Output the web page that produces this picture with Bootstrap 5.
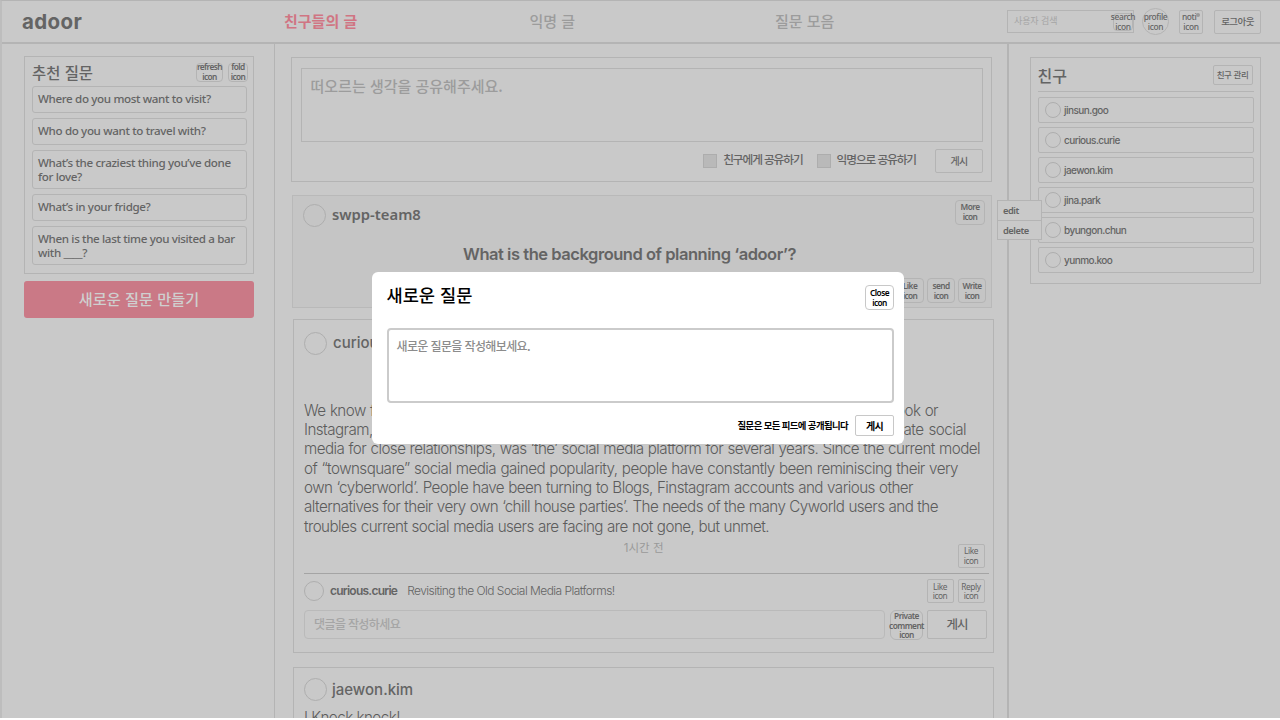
<!DOCTYPE html>
<html lang="ko">
<head>
<meta charset="utf-8">
<meta name="viewport" content="width=device-width, initial-scale=1">
<title>adoor</title>
<link href="https://cdn.jsdelivr.net/npm/bootstrap@5.3.0/dist/css/bootstrap.min.css" rel="stylesheet">
<style>
  :root { --page:#c9c9c9; --line:#b4b4b4; --ink:#646464; --mute:#9c9c9c; --pink:#ca7986; }
  body { width:1280px; height:720px; overflow:hidden; background:#fff; color:var(--ink);
         font-family:"Noto Sans CJK KR","Noto Sans",sans-serif; font-weight:500; line-height:1.2; }
  .screen { height:718px; background:var(--page); overflow:hidden; border-left:2px solid #bdbdbd; border-top:1px solid var(--line); }
  .topbar, .btn, .tag { white-space:nowrap; }
  .inter { font-family:Inter,"Noto Sans CJK KR",sans-serif; }
  .line { border:1px solid var(--line); }
  .line2 { border:1.5px solid var(--line); }

  .topbar { height:43px; border-bottom:2px solid var(--line); padding:0 19px 0 20px; }
  .logo { width:262px; font:700 20.5px/1 Inter,sans-serif; letter-spacing:.4px; padding-top:2px; flex:none; }
  .tab { width:245.5px; font-size:15px; color:var(--mute); margin-top:-1px; }
  .tab.on { color:#d07583; font-weight:700; }
  .search { width:127px; height:23px; font-size:9px; color:#a5a5a5; font-weight:400; padding:0 0 0 6px; letter-spacing:-.1px; }
  .tag { display:flex; flex-direction:column; align-items:center; justify-content:center; text-align:center;
         flex:none; border:1.5px solid var(--line); border-radius:4px; font-size:8.3px; line-height:9.6px;
         font-family:"Noto Sans",sans-serif; letter-spacing:-.55px; font-weight:600; width:28px; height:25px; }
  .tag.thin { font-weight:400; border-radius:2px; width:27px; height:24px; border-width:1px; letter-spacing:-.4px; }
  .tag.top { font-weight:500; font-size:8.4px; color:var(--ink); letter-spacing:-.35px; }
  .btn { --bs-btn-padding-x:0; --bs-btn-padding-y:0; --bs-btn-border-radius:2px; --bs-btn-color:var(--ink); --bs-btn-font-weight:500;
         --bs-btn-border-color:var(--line); --bs-btn-line-height:1; display:flex; align-items:center; justify-content:center; flex:none; }
  .dot { position:absolute; width:4px; height:4px; right:2px; top:2px; border-radius:50%; background:#999; }

  .side-l { width:273px; border-right:1.5px solid var(--line); padding:12px 20px 0 22px; }
  .suggest { height:218px; padding:5px 6px 0 7px; width:230px; }
  .q { border:1.5px solid var(--line); border-radius:3px; min-height:26.5px; margin-bottom:5.5px; padding:4.5px 5px 2px; font:500 11.6px/14.4px "Noto Sans",sans-serif; letter-spacing:-.35px; white-space:nowrap; }
  .q.two { min-height:38.5px; }
  .make { width:230px; height:37px; margin-top:7px; padding-bottom:2px; background:var(--pink); color:#cfcfcf; border:0; border-radius:3px; font-size:15.2px; }

  .feed { width:733.5px; border-right:2px solid var(--line); padding:12.5px 13px 0 16px; }
  .composer { width:701px; height:125px; padding:10px 8px 0 8.5px; margin-bottom:13px; }
  .composer .area { height:74px; padding:8px 9px; font-size:15px; color:var(--mute); }
  .check { width:14px; height:14px; background:#b9b9b9; border:1px solid #adadad; }
  .lbl { letter-spacing:-1.1px; }
  .ask { width:700px; height:113px; margin-left:1px; background:#c5c5c5; border:1px solid #b9b9b9; padding:4px 5px 0 10px; margin-bottom:11px; }
  .face { border:1px solid #aeaeae; border-radius:50%; flex:none; width:23px; height:23px; }
  .who { font-size:15px; font-weight:500; margin-left:6px; }
  .ask .who { font:600 14.8px/23px "Noto Sans",sans-serif; margin-top:3px; }
  .ask h2 { font-size:16.5px; font-weight:600; margin:18px 30px 0 0; letter-spacing:-.46px; }
  .post { width:701px; margin-left:1.5px; border:1.5px solid var(--line); padding:12px 4px 0 10.5px; }
  .story { font-weight:300; font-size:15.2px; line-height:19.35px; margin-top:46px; color:#5c5c5c; letter-spacing:-.55px; }
  .story div { text-align-last:justify; white-space:nowrap; }
  .comment { height:36px; border-top:1px solid #a4a4a4; }
  .reply { width:581px; height:29px; border:1.5px solid #bababa; border-radius:4px; font-size:12px; line-height:27px; padding-left:9px; color:#a5a5a5; letter-spacing:-.6px; }

  .side-r { padding:12.5px 0 0 21.5px; flex:1; }
  .friends { width:230.5px; height:227px; padding:8px 6px 0 6.5px; border:1.5px solid var(--line); }
  .pal { height:26px; margin-bottom:4px; padding-left:6px; border:1.5px solid var(--line); border-radius:2px; font-size:10px; letter-spacing:-.55px; }
  .pal .face { width:16px; height:16px; margin-right:3.5px; }

  .menu { position:absolute; left:997px; top:200px; width:45px; height:40px; background:var(--page); font:600 9.3px/19px "Noto Sans",sans-serif; letter-spacing:-.45px; }
  .menu div { padding-left:5px; height:19.5px; }
  .ask-box { position:absolute; left:372px; top:272px; width:532px; height:172px; border-radius:6px; background:#fff; color:#000; padding:13px 10px 0 14.5px; }
  .ask-box .area { height:75px; border:2px solid #cbcbcb; border-radius:4px; padding:9px 8px; font-size:12px; color:#8c8c8c; margin-top:18px; letter-spacing:-.62px; }
  .ask-box .tag, .ask-box .btn { border:1.5px solid #c8c8c8; color:#000; }
</style>
</head>
<body>
<div class="screen">
  <header class="topbar d-flex align-items-center">
    <div class="logo">adoor</div>
    <nav class="d-flex">
      <span class="tab on">친구들의 글</span><span class="tab">익명 글</span><span class="tab" style="width:130px">질문 모음</span>
    </nav>
    <div class="d-flex align-items-center ms-auto">
      <div class="search line2 d-flex align-items-center justify-content-between"><span>사용자 검색</span><span class="tag top" style="width:20px;height:18px"><span>search</span><span>icon</span></span></div>
      <span class="tag top rounded-circle" style="width:27px;height:27px;margin-left:8px"><span>profile</span><span>icon</span></span>
      <span class="tag top position-relative" style="width:24px;height:24px;margin-left:10px;border-radius:2px"><span>noti&nbsp;&nbsp;</span><span>icon</span><i class="dot"></i></span>
      <button class="btn" style="width:47px;height:24px;margin-left:11px;font-size:9.5px;letter-spacing:-.6px">로그아웃</button>
    </div>
  </header>

  <div class="d-flex" style="height:675px">
    <aside class="side-l">
      <section class="suggest line2">
        <div class="d-flex align-items-center" style="height:24px">
          <span class="me-auto" style="font-size:15.4px;margin-top:-3px">추천 질문</span>
          <span class="tag" style="width:27px;height:19px;margin:-4px 5px 0 0"><span>refresh</span><span>icon</span></span>
          <span class="tag" style="width:20px;height:19px;margin:-4px -1px 0 0"><span>fold</span><span>icon</span></span>
        </div>
        <div class="q">Where do you most want to visit?</div>
        <div class="q">Who do you want to travel with?</div>
        <div class="q two">What’s the craziest thing you’ve done<br>for love?</div>
        <div class="q">What’s in your fridge?</div>
        <div class="q two">When is the last time you visited a bar<br>with ____?</div>
      </section>
      <button class="btn make">새로운 질문 만들기</button>
    </aside>

    <main class="feed">
      <section class="composer line2">
        <div class="area line">떠오르는 생각을 공유해주세요.</div>
        <div class="d-flex align-items-center justify-content-end" style="font-size:11.7px;margin-top:7px;height:24px">
          <span class="check"></span><span class="lbl" style="margin:-2px 14px 0 6px">친구에게 공유하기</span>
          <span class="check"></span><span class="lbl" style="margin:-2px 19px 0 6px">익명으로 공유하기</span>
          <button class="btn" style="width:48px;height:24px;font-size:10px;letter-spacing:-.7px">게시</button>
        </div>
      </section>

      <section class="ask">
        <div class="d-flex"><span class="face" style="margin-top:4px"></span><span class="who me-auto">swpp-team8</span><span class="tag" style="width:30px;margin-right:1px"><span>More</span><span>icon</span></span></div>
        <h2 class="inter text-center">What is the background of planning ‘adoor’?</h2>
        <div class="d-flex justify-content-end" style="gap:3px;margin-top:14px">
          <span class="tag"><span>Like</span><span>icon</span></span><span class="tag"><span>send</span><span>icon</span></span><span class="tag"><span>Write</span><span>icon</span></span>
        </div>
      </section>

      <section class="post inter" style="height:334px;margin-bottom:14px">
        <div class="d-flex align-items-center"><span class="face"></span><span class="who">curious.curie</span></div>
        <div class="story">
          <div style="width:634px">We know for a fact that many people are today connected to others using apps like Facebook or</div>
          <div style="width:662px">Instagram, but only a few of us still remember that before them there was Cyworld, a private social</div>
          <div style="width:676px">media for close relationships, was ‘the’ social media platform for several years. Since the current model</div>
          <div style="width:654px">of “townsquare” social media gained popularity, people have constantly been reminiscing their very</div>
          <div style="width:609px">own ‘cyberworld’. People have been turning to Blogs, Finstagram accounts and various other</div>
          <div style="width:634px">alternatives for their very own ‘chill house parties’. The needs of the many Cyworld users and the</div>
          <div style="width:465px">troubles current social media users are facing are not gone, but unmet.</div>
        </div>
        <div class="d-flex" style="height:37px;padding-right:4px">
          <span class="ms-auto" style="font-size:11.5px;color:#999;font-weight:400;margin-right:294px;padding-top:6px">1시간 전</span>
          <span class="tag thin mt-2"><span>Like</span><span>icon</span></span>
        </div>
        <div class="comment d-flex align-items-center" style="font-size:12px">
          <span class="face" style="width:20px;height:20px"></span><b style="font-weight:600;margin:0 10px 0 6px;letter-spacing:-.75px">curious.curie</b><span class="me-auto" style="font-weight:300;letter-spacing:-.55px">Revisiting the Old Social Media Platforms!</span>
          <span class="tag thin" style="margin-right:4px"><span>Like</span><span>icon</span></span><span class="tag thin" style="margin-right:4px"><span>Reply</span><span>icon</span></span>
        </div>
        <div class="d-flex" style="margin-top:1.5px">
          <div class="reply">댓글을 작성하세요</div>
          <span class="tag" style="width:33px;height:30px;margin:0 4px 0 5px;border-width:1px;border-radius:6px"><span>Private</span><span>comment</span><span>icon</span></span>
          <button class="btn" style="width:60px;height:29px;font-size:12.5px;letter-spacing:-1px">게시</button>
        </div>
      </section>

      <section class="post inter" style="height:80px;padding-top:10.5px">
        <div class="d-flex align-items-center"><span class="face"></span><span class="who" style="margin-left:5px">jaewon.kim</span></div>
        <div class="story" style="margin-top:7px">I Knock knock!</div>
      </section>
    </main>

    <aside class="side-r">
      <section class="friends">
        <div class="d-flex align-items-center" style="height:26px;border-bottom:1.5px solid var(--line);margin-bottom:5px"><span class="me-auto" style="font-size:16px;margin-bottom:4px">친구</span><button class="btn" style="width:40px;height:20px;font-size:8.5px;margin:0 1px 7px 0;letter-spacing:-.4px">친구 관리</button></div>
        <div class="pal inter d-flex align-items-center"><span class="face"></span>jinsun.goo</div>
        <div class="pal inter d-flex align-items-center"><span class="face"></span>curious.curie</div>
        <div class="pal inter d-flex align-items-center"><span class="face"></span>jaewon.kim</div>
        <div class="pal inter d-flex align-items-center"><span class="face"></span>jina.park</div>
        <div class="pal inter d-flex align-items-center"><span class="face"></span>byungon.chun</div>
        <div class="pal inter d-flex align-items-center"><span class="face"></span>yunmo.koo</div>
      </section>
    </aside>
  </div>
</div>

<div class="menu line"><div style="border-bottom:1px solid var(--line)">edit</div><div>delete</div></div>

<div class="ask-box" role="dialog" aria-label="새로운 질문">
  <div class="d-flex justify-content-between"><span style="font-size:17.6px;margin-top:-1px">새로운 질문</span><span class="tag" style="width:29px"><span>Close</span><span>icon</span></span></div>
  <div class="area">새로운 질문을 작성해보세요.</div>
  <div class="d-flex align-items-center justify-content-end" style="margin-top:12px"><span style="font-size:9.4px;font-weight:700;margin-right:7px;letter-spacing:-.6px">질문은 모든 피드에 공개됩니다</span><button class="btn fw-bold" style="width:39px;height:21px;font-size:10px;letter-spacing:-.7px">게시</button></div>
</div>
<script src="https://cdn.jsdelivr.net/npm/bootstrap@5.3.0/dist/js/bootstrap.bundle.min.js"></script>
</body>
</html>
